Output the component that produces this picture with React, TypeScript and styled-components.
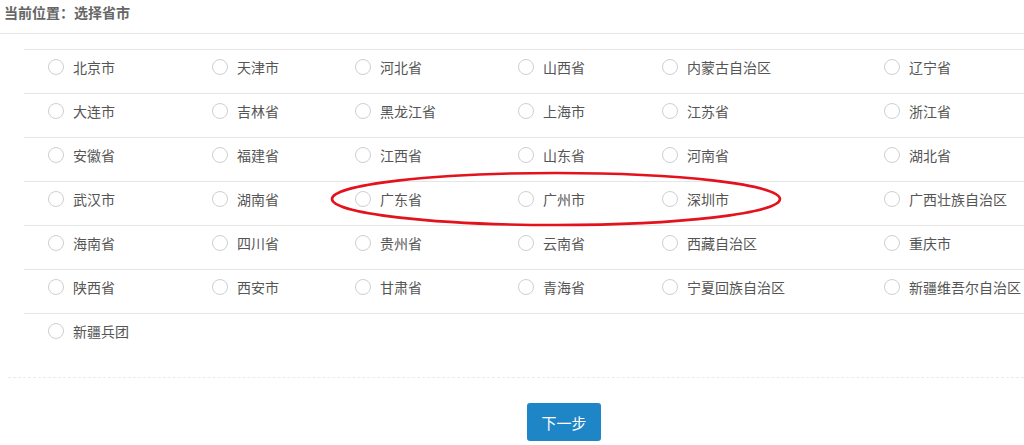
import styled, { createGlobalStyle } from 'styled-components';

const rows: string[][] = [
  ['北京市', '天津市', '河北省', '山西省', '内蒙古自治区', '辽宁省'],
  ['大连市', '吉林省', '黑龙江省', '上海市', '江苏省', '浙江省'],
  ['安徽省', '福建省', '江西省', '山东省', '河南省', '湖北省'],
  ['武汉市', '湖南省', '广东省', '广州市', '深圳市', '广西壮族自治区'],
  ['海南省', '四川省', '贵州省', '云南省', '西藏自治区', '重庆市'],
  ['陕西省', '西安市', '甘肃省', '青海省', '宁夏回族自治区', '新疆维吾尔自治区'],
  ['新疆兵团'],
];

const GlobalStyle = createGlobalStyle`
  body {
    margin: 0;
    background: #fff;
    font-family: "Noto Sans CJK SC", "Noto Sans", sans-serif;
    overflow: hidden;
  }
`;

export default function App() {
  return (
    <Page>
      <GlobalStyle />
      <Breadcrumb>当前位置：选择省市</Breadcrumb>

      <RegionTable>
        {rows.map((row, i) => (
          <RegionRow key={i}>
            {row.map((name) => (
              <Option key={name}>
                <Radio type="radio" name="region" value={name} />
                <span>{name}</span>
              </Option>
            ))}
          </RegionRow>
        ))}
      </RegionTable>

      <Footer>
        <NextButton>下一步</NextButton>
      </Footer>

      <Highlight viewBox="0 0 456 58" width="456" height="58">
        <ellipse cx="228" cy="29" rx="224" ry="26" fill="none" stroke="#e3121c" strokeWidth="2.6" />
      </Highlight>
    </Page>
  );
}

const Page = styled.div`
  position: relative;
  width: 1024px;
  height: 445px;
  overflow: hidden;
`;

const Breadcrumb = styled.div`
  padding: 0 4px 9px;
  line-height: 24px;
  font-size: 14px;
  font-weight: bold;
  color: #666;
  border-bottom: 1px solid #e6e6e6;
`;

const RegionTable = styled.div`
  margin: 15px 0 0 24px;
`;

const RegionRow = styled.div`
  display: grid;
  grid-template-columns: 164px 143px 163px 144px 222px 1fr;
  height: 44px;
  box-sizing: border-box;
  border-top: 1px solid #e6e6e6;
`;

const Option = styled.label`
  display: flex;
  align-items: center;
  gap: 9px;
  padding: 9px 0 0 24px;
  height: 16px;
  font-size: 14px;
  color: #555;
  white-space: nowrap;
`;

const Radio = styled.input`
  appearance: none;
  margin: 0;
  width: 16px;
  height: 16px;
  flex: none;
  border: 1px solid #cfcfcf;
  border-radius: 50%;
  background: #fff;
  box-sizing: border-box;
`;

const Footer = styled.div`
  margin: 20px 0 0 8px;
  padding-top: 25px;
  border-top: 1px dashed #ebebeb;
  padding-left: 519px;
`;

const NextButton = styled.button`
  width: 74px;
  height: 38px;
  border: none;
  border-radius: 3px;
  background: #1e86c7;
  color: #fff;
  font-family: "Noto Sans CJK SC", sans-serif;
  font-size: 15px;
`;

const Highlight = styled.svg`
  position: absolute;
  left: 328px;
  top: 170px;
  pointer-events: none;
`;
